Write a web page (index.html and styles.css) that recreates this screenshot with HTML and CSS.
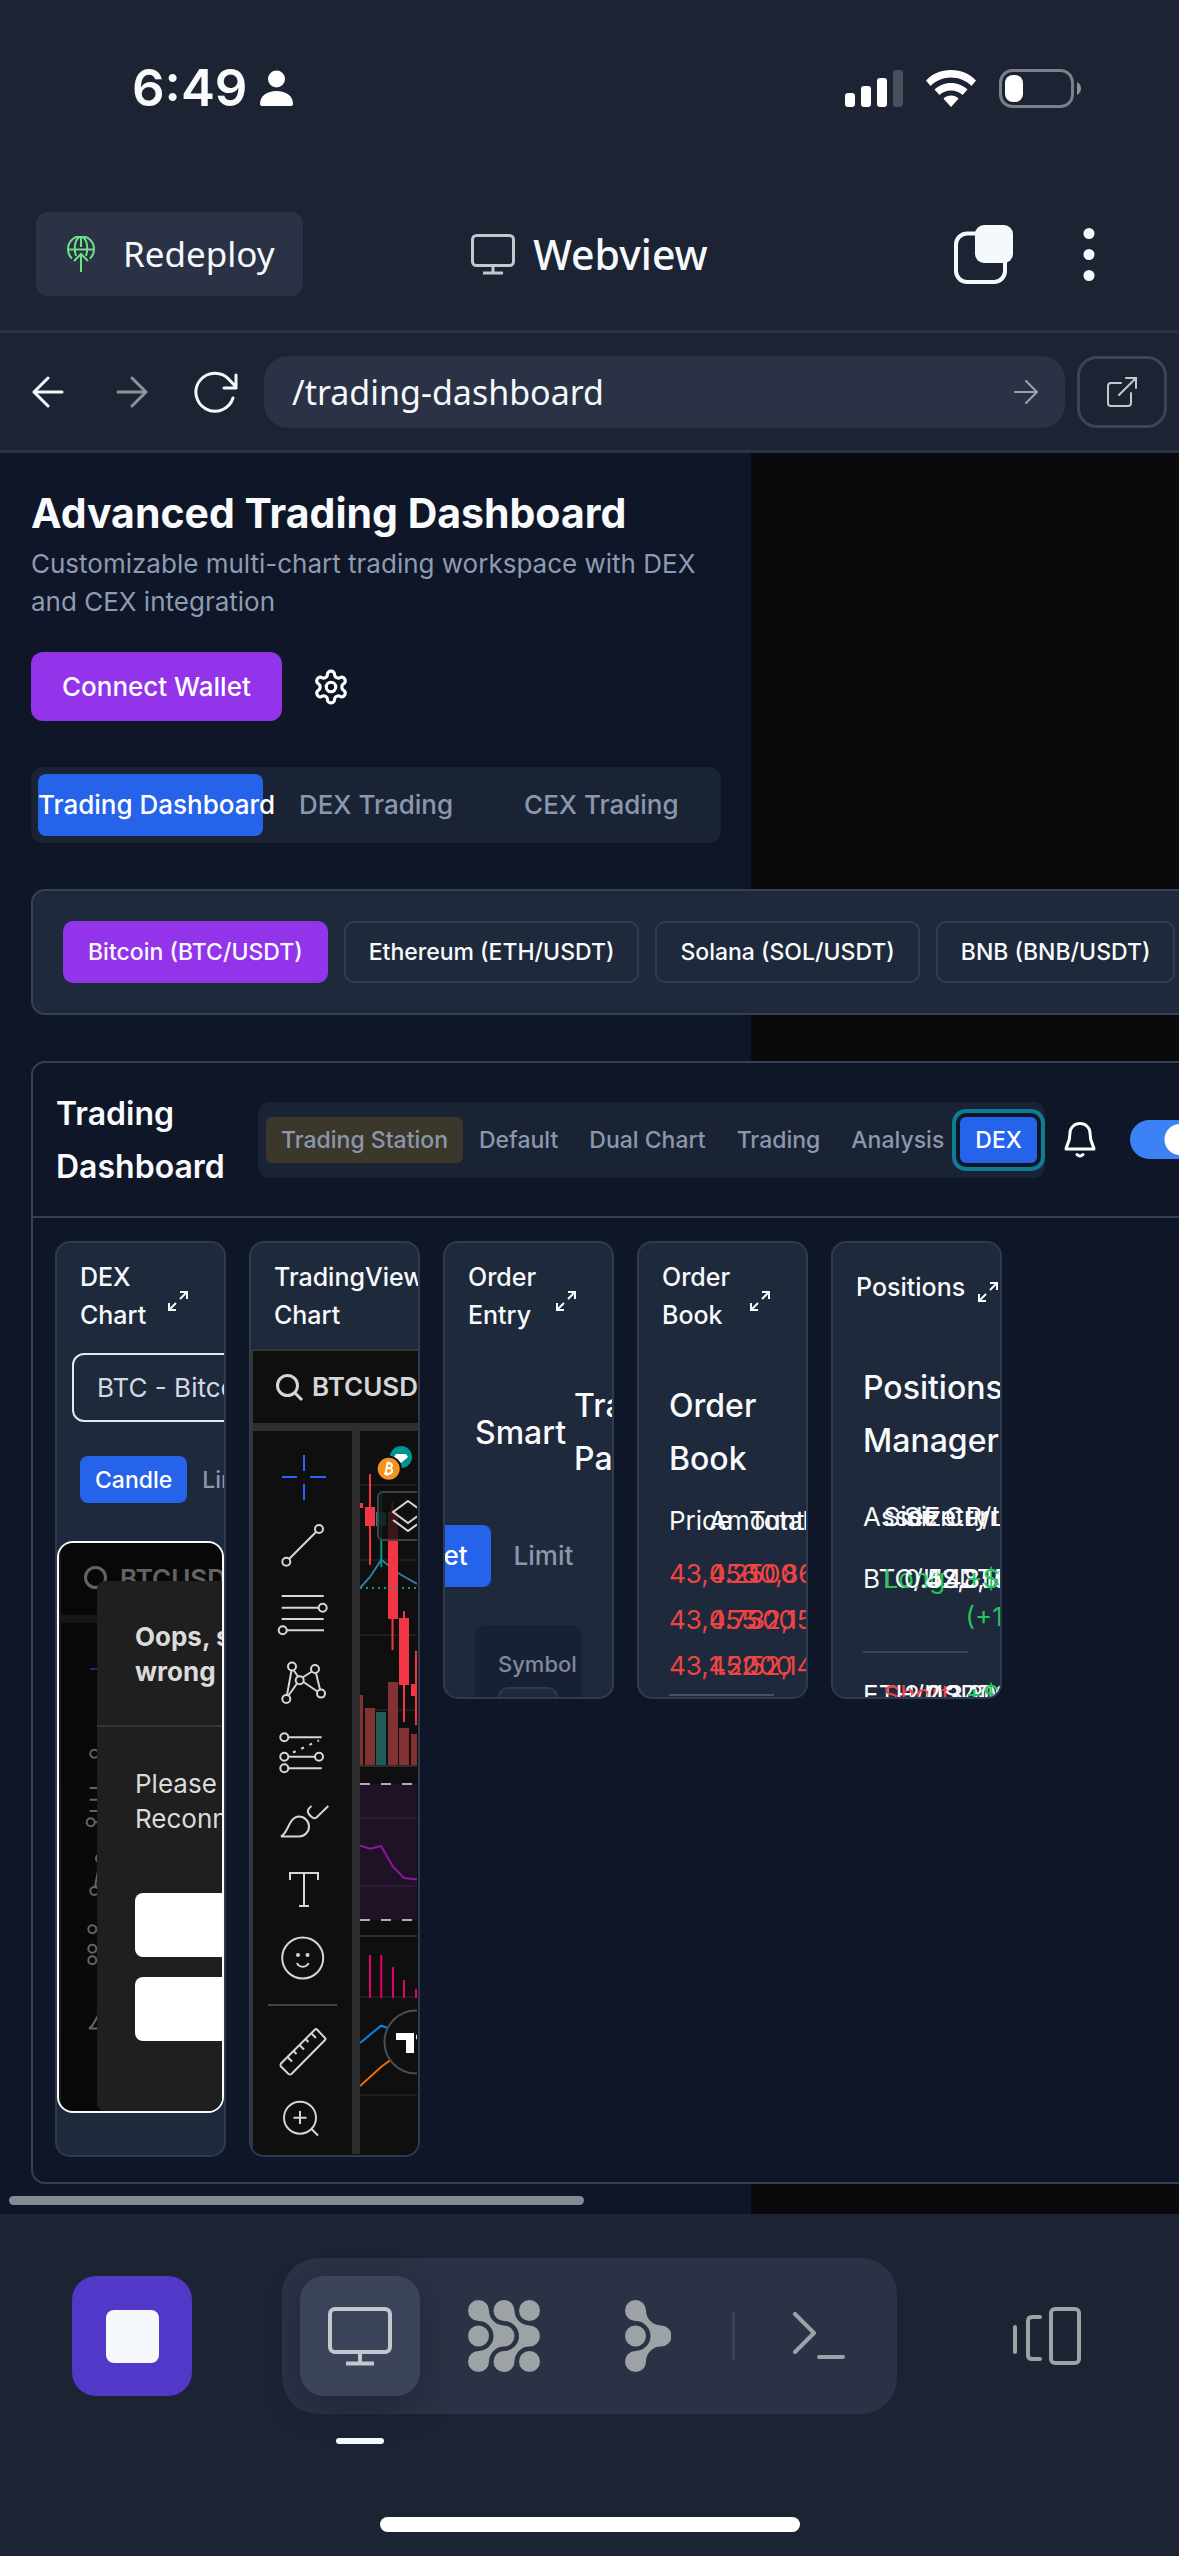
FILE: index.html
```html
<!DOCTYPE html>
<html lang="en">
<head>
<meta charset="utf-8">
<meta name="viewport" content="width=device-width, initial-scale=1">
<title>Webview – Trading Dashboard</title>
<link rel="stylesheet" href="styles.css">
</head>
<body>
<svg class="defs" aria-hidden="true">
  <symbol id="i-expand" viewBox="0 0 20 20"><path d="M12 1h7v7M19 1l-7 7M8 19H1v-7M1 19l7-7"/></symbol>
  <symbol id="i-search" viewBox="0 0 27 27"><circle cx="11.500" cy="11.500" r="10"/><path d="M19 19l7 7"/></symbol>
  <symbol id="i-tools" viewBox="0 0 99 723">
    <path class="cross" d="M51 24v16M51 53v16M29 46h15M57 46h16"/>
    <circle cx="33.300" cy="130.700" r="4"/><circle cx="66" cy="98" r="4"/><path d="M36.300 127.700L63 101"/>
    <path d="M28.700 165h42M28.700 176.700h37M28.700 188h42M34 199.300h37"/><circle cx="69.700" cy="176.700" r="4"/><circle cx="29.700" cy="199.300" r="4"/>
    <circle cx="39" cy="235.500" r="4"/><circle cx="62" cy="238" r="4"/><circle cx="46.700" cy="249.300" r="4"/><circle cx="33.300" cy="268" r="4"/><circle cx="68" cy="262.600" r="4"/>
    <path d="M38.500 239.500L34 264M40.500 239l4.500 6.500M44 252.500l-8.500 12M49.500 246.500l9.500-6M50.500 251l14 9.500M63 242l4 16.600"/>
    <circle cx="31.300" cy="306.300" r="4"/><circle cx="31.300" cy="325.700" r="4"/><circle cx="66" cy="325.700" r="4"/><circle cx="31.300" cy="337.300" r="4"/>
    <path d="M35.300 306.300h33.400M35.300 325.700H62M35.300 337.300h33.400"/><path class="dots" d="M40 321.500L66 309.500"/>
    <path d="M28 405.500c7-3 8-20 18-20a10 10 0 0 1 0 20zM58.500 375c-5 4-5 7 1 11.500q2 1.500 4 0L75.300 375"/>
    <path d="M37 449v-7h28v7M51 442v33M46 475h10"/>
    <circle cx="49.700" cy="527" r="20.500"/><path d="M44 532c2 5 9.500 5 11.500 0"/><circle class="fill" cx="45" cy="524" r="2"/><circle class="fill" cx="54.500" cy="524" r="2"/>
    <path class="rule" d="M15 574h69"/>
    <path d="M62 598.500q1-1 2 0l8 8.500q1 1 0 2L38.500 643q-1.500 1-3 0L28 635.500q-1-1.500 0-3zM34.500 626l4.500 4.500M40.500 620l3 3M46.500 614l4.500 4.500M52.500 608l3 3M58.500 602.500l4.500 4.500"/>
    <circle cx="47" cy="686.700" r="16"/><path d="M40.500 686.700h13M47 680v13M58.500 698l6.500 6.500"/>
  </symbol>
</svg>

<header class="shell-top">
  <div class="status">
    <div class="status-left">
      <span class="clock">6:49</span>
      <svg width="33" height="36" viewBox="0 0 33 36" fill="#fff"><circle cx="16.500" cy="9" r="8.500"/><path d="M0 34c0-8 7-13 16.500-13S33 26 33 34q0 2-2 2H2q-2 0-2-2z"/></svg>
    </div>
    <div class="status-right">
      <svg width="58" height="37" viewBox="0 0 58 37" fill="#fff"><rect y="23" width="10" height="14" rx="3"/><rect x="16" y="16" width="10" height="21" rx="3"/><rect x="32" y="8" width="10" height="29" rx="3"/><rect x="48" width="10" height="37" rx="3" fill="#4a4f5c"/></svg>
      <svg width="50" height="37" viewBox="0 0 50 37" fill="#fff"><path d="M25 0C15 0 6 4 0 10.500l4.500 5.500C10 10.500 17 7.500 25 7.500S40 10.500 45.500 16l4.500-5.500C44 4 35 0 25 0z"/><path d="M25 13c-6.500 0-12 2.500-16.500 6.500l5 5.500c3-3 7-4.500 11.500-4.500s8.500 1.500 11.500 4.500l5-5.500C37 15.500 31.500 13 25 13z"/><path d="M25 25.500c-3 0-5.500 1.200-7.500 3.200L25 37l7.500-8.300c-2-2-4.500-3.200-7.500-3.200z"/></svg>
      <svg width="82" height="39" viewBox="0 0 82 39"><rect x="1.500" y="1.500" width="72" height="36" rx="12" fill="none" stroke="#7b7f89" stroke-width="3"/><path d="M78 13q4 2.500 4 6.500t-4 6.500z" fill="#8e929b"/><rect x="6" y="6" width="18" height="27" rx="8" fill="#fff"/></svg>
    </div>
  </div>

  <div class="titlebar">
    <button class="redeploy" type="button">
      <svg width="28" height="36" viewBox="0 0 28 36" fill="none" stroke="#6fe088" stroke-width="2"><path d="M5 22.500A13 13 0 1 1 23 22.500M1 13.500h26M9 20C6 10 9 1 14 1s8 9 5 19M14 36V18M7 25l7-7 7 7M14 1v10"/></svg>
      Redeploy
    </button>
    <div class="view-name">
      <svg width="44" height="41" viewBox="0 0 44 41" fill="none" stroke="#c2c8cc" stroke-width="3"><rect x="1.500" y="1.500" width="41" height="30" rx="4"/><path d="M22 32v7M12 39h20"/></svg>
      <span>Webview</span>
    </div>
    <div class="title-actions">
      <button class="plain" type="button" aria-label="Tabs"><svg width="59" height="59" viewBox="0 0 59 59"><rect x="2" y="8.500" width="49" height="48.500" rx="11" fill="none" stroke="#f5f9fc" stroke-width="4"/><rect x="21" width="38" height="38" rx="9" fill="#f5f9fc"/></svg></button>
      <button class="plain" type="button" aria-label="More"><svg width="12" height="53" viewBox="0 0 12 53" fill="#f5f9fc"><circle cx="6" cy="5.500" r="5.500"/><circle cx="6" cy="26.500" r="5.500"/><circle cx="6" cy="47.500" r="5.500"/></svg></button>
    </div>
  </div>

  <form class="urlbar">
    <div class="nav-buttons">
      <button class="plain" type="button" aria-label="Back"><svg width="32" height="32" viewBox="0 0 32 32" fill="none" stroke="#f5f9fc" stroke-width="3" stroke-linecap="round" stroke-linejoin="round"><path d="M30 16H2M16 2L2 16l14 14"/></svg></button>
      <button class="plain" type="button" aria-label="Forward"><svg width="32" height="32" viewBox="0 0 32 32" fill="none" stroke="#8d9296" stroke-width="3" stroke-linecap="round" stroke-linejoin="round"><path d="M2 16h28M16 2l14 14-14 14"/></svg></button>
      <button class="plain" type="button" aria-label="Reload"><svg width="44" height="42" viewBox="0 0 44 42" fill="none" stroke="#f5f9fc" stroke-width="3" stroke-linecap="round" stroke-linejoin="round"><path d="M39 27A19 19 0 1 1 35.500 9L42 16M42 4v13H30"/></svg></button>
    </div>
    <div class="address">
      <input type="text" value="/trading-dashboard" aria-label="Address">
      <button class="plain" type="button" aria-label="Go"><svg width="24" height="24" viewBox="0 0 24 24" fill="none" stroke="#9da2a6" stroke-width="2" stroke-linecap="round" stroke-linejoin="round"><path d="M1 12h22M12 1l11 11-11 11"/></svg></button>
    </div>
    <button class="external" type="button" aria-label="Open in new tab"><svg width="30" height="30" viewBox="0 0 30 30" fill="none" stroke="#c2c8cc" stroke-width="2" stroke-linecap="round"><path d="M14 6H4Q1 6 1 9v17q0 3 3 3h17q3 0 3-3V16M19 1h10v10M29 1L12 18"/></svg></button>
  </form>
</header>

<main class="viewport">
  <div class="workspace">
    <h1>Advanced Trading Dashboard</h1>
    <p class="lead">Customizable multi-chart trading workspace with DEX and CEX integration</p>

    <div class="wallet-row">
      <button class="connect" type="button">Connect Wallet</button>
      <button class="plain" type="button" aria-label="Settings"><svg width="38" height="38" viewBox="0 0 24 24" fill="none" stroke="#fff" stroke-width="2" stroke-linecap="round" stroke-linejoin="round"><path d="M12.220 2h-.440a2 2 0 0 0-2 2v.180a2 2 0 0 1-1 1.730l-.430.250a2 2 0 0 1-2 0l-.150-.080a2 2 0 0 0-2.730.730l-.220.380a2 2 0 0 0 .730 2.730l.150.100a2 2 0 0 1 1 1.720v.510a2 2 0 0 1-1 1.740l-.150.090a2 2 0 0 0-.730 2.730l.220.380a2 2 0 0 0 2.730.730l.150-.080a2 2 0 0 1 2 0l.430.250a2 2 0 0 1 1 1.730V20a2 2 0 0 0 2 2h.440a2 2 0 0 0 2-2v-.180a2 2 0 0 1 1-1.730l.430-.250a2 2 0 0 1 2 0l.150.080a2 2 0 0 0 2.730-.730l.220-.390a2 2 0 0 0-.730-2.730l-.150-.080a2 2 0 0 1-1-1.740v-.500a2 2 0 0 1 1-1.740l.150-.090a2 2 0 0 0 .730-2.730l-.220-.380a2 2 0 0 0-2.730-.730l-.150.080a2 2 0 0 1-2 0l-.430-.250a2 2 0 0 1-1-1.730V4a2 2 0 0 0-2-2z"/><circle cx="12" cy="12" r="3"/></svg></button>
    </div>

    <nav class="tabs">
      <button class="tab active" type="button">Trading Dashboard</button>
      <button class="tab" type="button">DEX Trading</button>
      <button class="tab" type="button">CEX Trading</button>
    </nav>

    <section class="pairs">
      <button class="pair active" type="button">Bitcoin (BTC/USDT)</button>
      <button class="pair" type="button">Ethereum (ETH/USDT)</button>
      <button class="pair" type="button">Solana (SOL/USDT)</button>
      <button class="pair" type="button">BNB (BNB/USDT)</button>
    </section>

    <section class="board">
      <header class="board-head">
        <h2>Trading<br>Dashboard</h2>
        <div class="layouts">
          <button class="layout station" type="button">Trading Station</button>
          <button class="layout" type="button">Default</button>
          <button class="layout" type="button">Dual Chart</button>
          <button class="layout" type="button">Trading</button>
          <button class="layout" type="button">Analysis</button>
          <button class="layout dex" type="button">DEX</button>
        </div>
        <button class="plain" type="button" aria-label="Alerts"><svg width="32" height="36" viewBox="0 0 32 36" fill="none" stroke="#fff" stroke-width="3" stroke-linecap="round" stroke-linejoin="round"><path d="M6 11a10 9.500 0 0 1 20 0c0 10 4 13 4 16H2c0-3 4-6 4-16zM13 32.500q3 3 6 0"/></svg></button>
        <input class="toggle" type="checkbox" checked aria-label="Live alerts">
      </header>

      <div class="panels">
        <article class="panel tall">
          <header><h3>DEX Chart</h3><button class="plain" type="button" aria-label="Expand"><svg class="expand"><use href="#i-expand"/></svg></button></header>
          <div class="dex-controls">
            <select aria-label="Token"><option>BTC - Bitcoin</option></select>
            <div class="chart-kind"><button class="active" type="button">Candle</button><button type="button">Line</button></div>
          </div>
          <div class="frame">
            <div class="tv dimmed">
              <div class="tv-head"><svg width="27" height="27"><use href="#i-search"/></svg><span>BTCUSD</span></div>
              <div class="tv-body"><svg class="tools" width="99" height="723"><use href="#i-tools"/></svg></div>
            </div>
            <div class="dialog">
              <h4>Oops, something<br>wrong happened</h4>
              <p>Please try again<br>Reconnect now</p>
              <div class="dialog-actions"><button type="button" aria-label="Reconnect"></button><button type="button" aria-label="Dismiss"></button></div>
            </div>
          </div>
        </article>

        <article class="panel tall">
          <header><h3>TradingView Chart</h3></header>
          <div class="tv">
            <div class="tv-head"><svg width="27" height="27"><use href="#i-search"/></svg><span>BTCUSD</span></div>
            <div class="tv-body">
              <svg class="tools" width="99" height="723"><use href="#i-tools"/></svg>
              <svg class="candles" width="57" height="723" viewBox="0 0 57 723" fill="none">
                <path d="M0 54h57M0 129h57M0 204h57M0 279h57M0 566h57M0 664h57" stroke="#1e1e1e" stroke-width="2"/>
                <path d="M0 335h57M0 505h57" stroke="#2e2e2e" stroke-width="2"/>
                <g fill="#823232"><path d="M0 264h3v70H0zM5 277h10v57H5zM28 251h10v83H28zM39 297h10v37H39zM51 303h6v31h-6z"/></g>
                <path d="M16 281h10v53H16z" fill="#1e5c55"/>
                <path d="M0 157l10-11 11.300-17.300L38 142l19 11" stroke="#2f7d9f" stroke-width="2"/>
                <path d="M21.300 61v75" stroke="#089981" stroke-width="2"/><path d="M16 81h10v14H16z" fill="#089981"/>
                <path d="M10 43v91M32.500 71v148M44 180v111M56 220v74" stroke="#f23645" stroke-width="2"/>
                <path d="M0 72h3v5H0zM5 76h10v19H5zM28 81h10v107H28zM39 187h10v67H39zM51 253h6v12h-6z" fill="#f23645"/>
                <path d="M0 157h57" stroke="#089981" stroke-width="2" stroke-dasharray="2 4"/>
                <circle cx="41" cy="26" r="11" fill="#009393"/><path d="M36 23h10l2 3-7 6-7-6z" fill="#fff"/>
                <circle cx="28.700" cy="37.700" r="13" fill="#0f0f0f"/><circle cx="28.700" cy="37.700" r="11" fill="#f7931a"/>
                <path d="M26 32.500h4q2.500.5 2 2.500t-3 2.300q3.500.4 3 2.900t-4 2.600h-4M27.500 32.500l-2 10.300M26.500 37.300h3M28.500 30.500v2M27 42.800v2" stroke="#fff" stroke-width="2"/>
                <rect x="18" y="61" width="60" height="48" rx="5" fill="#0f0f0f" fill-opacity=".8" stroke="#434343" stroke-width="2"/>
                <path d="M48 70l15 11-15 11-15-11zM33 89l15 11 15-11" stroke="#d6d6d6" stroke-width="2"/>
                <path d="M0 353h57v136H0z" fill="#1f1126"/><path d="M0 387h57M0 455h57" stroke="#2a1d31" stroke-width="2"/>
                <path d="M0 353h10M21 353h10M42 353h10M0 489h10M21 489h10M42 489h10" stroke="#b8a8bc" stroke-width="2"/>
                <path d="M0 414.700l10 3 11-2.700 12 20.700L44 447l13 1.500" stroke="#8a189e" stroke-width="2"/>
                <path d="M10 524v43M21.300 524v43M33 536v31M44 549v18M56 558v9" stroke="#e5006d" stroke-width="2"/>
                <path d="M0 612l21-17.300 9 3" stroke="#0a84e8" stroke-width="2"/><path d="M0 655l21.300-19.300L32 628" stroke="#ef6c00" stroke-width="2"/>
                <circle cx="56" cy="611" r="31.500" fill="#0f0f0f" stroke="#4d4d4d" stroke-width="2"/>
                <path d="M36 602h18v20h-8v-13H36z" fill="#fff"/><circle cx="60" cy="606" r="4" fill="#fff"/>
              </svg>
            </div>
          </div>
        </article>

        <article class="panel">
          <header><h3>Order Entry</h3><button class="plain" type="button" aria-label="Expand"><svg class="expand"><use href="#i-expand"/></svg></button></header>
          <div class="panel-body entry">
            <div class="big smart"><span>Smart</span><span>Trading<br>Panel</span></div>
            <div class="order-kind"><button class="active" type="button">Market</button><button type="button">Limit</button><button type="button">Stop</button></div>
            <div class="order-form"><label for="symbol">Symbol</label><input id="symbol" type="text"></div>
          </div>
        </article>

        <article class="panel">
          <header><h3>Order Book</h3><button class="plain" type="button" aria-label="Expand"><svg class="expand"><use href="#i-expand"/></svg></button></header>
          <div class="panel-body">
            <div class="big">Order Book</div>
            <div class="book">
              <table>
                <thead><tr><th>Price</th><th>Amount</th><th>Total</th></tr></thead>
                <tbody>
                  <tr><td>43,456</td><td>0.2500</td><td>10,864</td></tr>
                  <tr><td>43,455</td><td>0.7500</td><td>32,150</td></tr>
                  <tr><td>43,452</td><td>1.2000</td><td>52,142</td></tr>
                </tbody>
              </table>
            </div>
          </div>
        </article>

        <article class="panel">
          <header><h3>Positions</h3><button class="plain" type="button" aria-label="Expand"><svg class="expand"><use href="#i-expand"/></svg></button></header>
          <div class="panel-body">
            <div class="big">Positions Manager</div>
            <table class="positions">
              <thead><tr><th>Asset</th><th>Side</th><th>Size</th><th>Entry</th><th>Current</th><th>P/L</th></tr></thead>
              <tbody>
                <tr><td>BTC/USDT</td><td class="up">Long</td><td>0.5</td><td>42,850</td><td>43,150</td><td class="up">+$510<br>(+1.2%)</td></tr>
                <tr><td>ETH/USDT</td><td class="down">Short</td><td>2.0</td><td>2,340</td><td>2,310</td><td class="up">+$60<br>(+1.3%)</td></tr>
              </tbody>
            </table>
          </div>
        </article>
      </div>
    </section>
  </div>
  <div class="scrollbar"></div>
</main>

<footer class="dock">
  <div class="dock-row">
    <button class="stop" type="button" aria-label="Stop"><span></span></button>
    <nav class="tools-pill">
      <button class="dock-btn active" type="button" aria-label="Webview"><svg width="64" height="59" viewBox="0 0 64 59" fill="none" stroke="#c2c8cc" stroke-width="4"><rect x="2" y="2" width="60" height="43" rx="5"/><path d="M32 45v11M18 56.500h28"/></svg></button>
      <button class="dock-btn" type="button" aria-label="Agent"><svg width="72" height="72" viewBox="0 0 72 72" fill="#9da2a6"><path id="chev" d="M21 10.500A15 15 0 0 0 36 25.500A10.500 10.500 0 0 1 36 46.500A15 15 0 0 0 21 61.500A10.500 10.500 0 1 1 10.500 51A15 15 0 0 0 10.500 21A10.500 10.500 0 1 1 21 10.500Z"/><use href="#chev" x="25.500"/><circle cx="10.500" cy="36" r="10.500"/><circle cx="61.500" cy="10.500" r="10.500"/><circle cx="61.500" cy="61.500" r="10.500"/></svg></button>
      <button class="dock-btn" type="button" aria-label="Assistant"><svg width="46" height="72" viewBox="0 0 46 72" fill="#9da2a6"><use href="#chev"/><circle cx="10.500" cy="36" r="10.500"/></svg></button>
      <span class="divider"></span>
      <button class="dock-btn" type="button" aria-label="Shell"><svg width="54" height="48" viewBox="0 0 54 48" fill="none" stroke="#9da2a6" stroke-width="4" stroke-linecap="round" stroke-linejoin="round"><path d="M3 2l19 19L3 40M27 45h24"/></svg></button>
    </nav>
    <button class="dock-btn" type="button" aria-label="Switch view"><svg width="68" height="59" viewBox="0 0 68 59" fill="none" stroke="#9da2a6" stroke-width="4" stroke-linecap="round"><path d="M2 20v25M27 10H19q-4 0-4 4v34q0 4 4 4h8"/><rect x="38" y="2" width="28" height="54" rx="4"/></svg></button>
  </div>
  <div class="home-bar"></div>
</footer>
</body>
</html>
```

FILE: styles.css
```css
* { box-sizing: border-box; }

body {
  margin: 0;
  min-height: 100vh;
  display: flex;
  flex-direction: column;
  background: #1c2333;
  color: #f8fafc;
  font-family: Inter, "Liberation Sans", sans-serif;
  font-size: 26px;
  line-height: 38px;
}

h1, h2, h3, h4, p { margin: 0; }
svg { display: block; flex: none; }
button, input, select { font: inherit; color: inherit; }
button { margin: 0; padding: 0; border: 0; background: none; white-space: nowrap; }
.defs { position: absolute; width: 0; height: 0; }
.plain { display: flex; align-items: center; justify-content: center; }

/* Phone status bar and app chrome */
.shell-top { font-family: "Noto Sans", "Open Sans", sans-serif; }

.status {
  height: 176px;
  padding: 0 98px 0 132px;
  display: flex;
  align-items: center;
  justify-content: space-between;
}
.status-left { display: flex; align-items: center; gap: 13px; }
.status-right { display: flex; align-items: center; gap: 23px; }
.clock { font-family: Inter, sans-serif; font-size: 51px; font-weight: 600; }

.titlebar {
  display: grid;
  grid-template-columns: 1fr auto 1fr;
  align-items: center;
  padding: 36px 36px 34px;
  border-bottom: 3px solid #2b3245;
}
.redeploy {
  justify-self: start;
  height: 84px;
  padding: 0 28px 0 31px;
  display: flex;
  align-items: center;
  gap: 28px;
  border-radius: 12px;
  background: #2b3245;
  color: #f5f9fc;
  font-size: 35px;
}
.view-name { display: flex; align-items: center; gap: 18px; color: #f5f9fc; font-size: 41px; font-weight: 500; }
.title-actions { display: flex; justify-content: flex-end; align-items: center; gap: 70px; padding-right: 48px; }

.urlbar {
  display: flex;
  align-items: center;
  padding: 23px 12px 22px 6px;
  border-bottom: 3px solid #2b3245;
}
.nav-buttons { display: flex; margin-right: 6px; }
.nav-buttons button { width: 84px; height: 72px; }
.address {
  flex: 1;
  min-width: 0;
  height: 72px;
  margin-right: 12px;
  padding: 0 27px 0 28px;
  display: flex;
  align-items: center;
  border-radius: 24px;
  background: #2b3245;
}
.address input {
  flex: 1;
  min-width: 0;
  height: 60px;
  padding: 0;
  border: 0;
  outline: 0;
  background: none;
  color: #f5f9fc;
  font-size: 34px;
  line-height: 60px;
}
.external {
  width: 90px;
  height: 72px;
  display: flex;
  align-items: center;
  justify-content: center;
  border: 3px solid #3c445c;
  border-radius: 20px;
}

/* Embedded page: the workspace is narrower than the cards inside it */
.viewport { overflow: hidden; background: linear-gradient(90deg, #0e1628 63.7%, #0a0a0d 63.7%); }
.workspace { width: 63.7%; padding: 34px 30px 0 31px; }
h1 { font-size: 41px; line-height: 53px; font-weight: 700; white-space: nowrap; }
.lead { margin-top: 5px; color: #8f9bb0; }

.wallet-row { display: flex; align-items: center; gap: 30px; margin-top: 31px; }
.connect {
  height: 69px;
  padding: 0 31px;
  border-radius: 12px;
  background: #9333ea;
  color: #fff;
  font-weight: 500;
}

.tabs {
  display: grid;
  grid-template-columns: repeat(3, minmax(0, 1fr));
  margin-top: 46px;
  padding: 7px;
  border-radius: 12px;
  background: #1a2334;
}
.tab {
  height: 62px;
  display: flex;
  align-items: center;
  justify-content: safe center;
  border-radius: 8px;
  color: #8b97ad;
  font-weight: 500;
}
.tab.active { background: #2563eb; color: #fff; }

.pairs {
  width: 1400px;
  margin-top: 46px;
  padding: 30px;
  display: flex;
  gap: 16px;
  border: 2px solid #334155;
  border-radius: 14px;
  background: #1e293b;
}
.pair {
  height: 62px;
  padding: 0 23px;
  border: 2px solid #2f3d50;
  border-radius: 10px;
  font-size: 23px;
  font-weight: 500;
}
.pair.active { border-color: #9333ea; background: #9333ea; }

.board {
  width: 1400px;
  margin-top: 46px;
  border: 2px solid #334155;
  border-radius: 14px;
  background: #0e1628;
}
.board-head {
  height: 155px;
  padding: 0 23px;
  display: flex;
  align-items: center;
  border-bottom: 2px solid #334155;
}
h2 { width: 171px; margin-right: 31px; font-size: 32px; line-height: 53px; font-weight: 600; }
.layouts {
  display: flex;
  gap: 1px;
  margin-right: 19px;
  padding: 15px 8px;
  border-radius: 12px;
  background: #1a2334;
}
.layout {
  height: 46px;
  padding: 0 15px;
  border-radius: 6px;
  color: #8b97ad;
  font-size: 23px;
  font-weight: 500;
}
.layout.station { background: #3c372b; }
.layout.dex {
  background: #2563eb;
  color: #fff;
  box-shadow: 0 0 0 4px #0e1628, 0 0 0 8px #0e7c93;
}
.toggle {
  appearance: none;
  width: 70px;
  height: 39px;
  margin: 0 0 0 34px;
  border-radius: 20px;
  background: radial-gradient(circle at 50px 50%, #fff 15px, #3b82f6 16px);
}

/* Dashboard panels */
.panels { display: grid; grid-template-columns: repeat(5, 171px); gap: 23px; align-items: start; padding: 23px 22px 25px; }
.panel {
  height: 458px;
  overflow: hidden;
  border: 2px solid #2d3b4e;
  border-radius: 15px;
  background: #1e293b;
}
.panel.tall { height: 916px; display: flex; flex-direction: column; }
.panel > header {
  min-height: 88px;
  padding: 15px 23px;
  display: flex;
  align-items: center;
  gap: 13px;
  justify-content: space-between;
}
h3 { font-size: 25px; line-height: 38px; font-weight: 500; }
.expand { width: 20px; height: 20px; margin: 10px 13px 0 0; fill: none; stroke: #f8fafc; stroke-width: 2; }

.dex-controls { padding: 4px 0 38px 15px; }
.dex-controls select {
  appearance: none;
  width: 300px;
  height: 69px;
  padding: 0 23px;
  border: 2px solid #e5e9ee;
  border-radius: 12px;
  background: #1e293b;
  color: #d3d9e2;
}
.chart-kind { display: flex; margin: 34px 0 0 8px; }
.chart-kind button { height: 47px; padding: 0 15px; border-radius: 8px; color: #8b97ad; font-size: 23px; font-weight: 500; }
.chart-kind .active { background: #2563eb; color: #fff; }

.frame {
  position: relative;
  height: 572px;
  overflow: hidden;
  border: 2px solid #f8fafc;
  border-radius: 16px;
  background: #060606;
}
.tv { flex: 1; min-height: 0; overflow: hidden; border-top: 2px solid #363636; border-left: 2px solid #363636; background: #0f0f0f; color: #d6d6d6; }
.tv.dimmed { opacity: .45; border-top: 0; background: #0d0d0d; }
.tv-head {
  height: 80px;
  padding-left: 23px;
  display: flex;
  align-items: center;
  gap: 9px;
  border-bottom: 8px solid #2e2e2e;
  font-weight: 600;
}
.tv-head svg { fill: none; stroke: #d6d6d6; stroke-width: 3; }
.tv-body { display: flex; }
.tools { fill: none; stroke: #d6d6d6; stroke-width: 2; box-sizing: content-box; border-right: 8px solid #2e2e2e; }
.cross { stroke: #2962ff; }
.rule { stroke: #434343; }
.fill { fill: #d6d6d6; stroke: none; }
.dots { stroke-dasharray: 3 6; }
.dialog {
  position: absolute;
  inset: 38px -200px 0 38px;
  border-radius: 8px;
  background: #1f1f1f;
  color: #dbdbdb;
  line-height: 35px;
}
.dialog h4 { padding: 38px 38px 36px; border-bottom: 2px solid #363636; font-weight: 700; white-space: nowrap; }
.dialog p { padding: 39px 38px; white-space: nowrap; }
.dialog-actions { display: grid; gap: 20px; padding: 18px 38px; }
.dialog-actions button { height: 64px; border-radius: 8px; background: #fff; }

.panel-body { padding: 30px; }
.big { font-size: 32px; line-height: 53px; font-weight: 500; }
.smart { display: flex; align-items: center; gap: 8px; }
.order-kind { display: flex; justify-content: center; margin-top: 40px; }
.order-kind button { height: 62px; padding: 0 23px; border-radius: 8px; color: #8b97ad; font-weight: 500; }
.order-kind .active { background: #2563eb; color: #fff; }
.order-form { height: 120px; margin-top: 38px; padding: 20px 23px; border-radius: 12px; background: #182033; }
.order-form label { display: block; color: #7d899e; font-size: 22px; font-weight: 500; }
.order-form input { width: 60px; height: 60px; margin-top: 4px; border: 2px solid #2d3b4e; border-radius: 10px; background: #1e293b; }

table { border-collapse: collapse; table-layout: fixed; }
th, td { padding: 0; text-align: left; vertical-align: top; font-weight: 400; white-space: nowrap; }
.book { width: 105px; margin-top: 17px; padding-bottom: 9px; border-bottom: 2px solid #475161; }
.book table { width: 120px; }
.book thead th { padding-bottom: 15px; }
.book td { padding-bottom: 8px; color: #ef4444; }
.book tbody tr:last-child td { padding-bottom: 0; }
.positions { width: 123px; margin-top: 31px; }
.positions th { padding-bottom: 24px; }
.positions td { padding-bottom: 17px; }
.positions tbody tr + tr td { padding-top: 23px; }
.positions tbody tr:first-child { background: linear-gradient(#384456, #384456) left bottom / 105px 2px no-repeat; }
.up { color: #22c55e; }
.down { color: #ef4444; }

.scrollbar { width: 48.8%; height: 9px; margin: 12px 9px 9px; border-radius: 5px; background: #868a93; }

/* Bottom dock */
.dock { padding: 44px 72px 24px; }
.dock-row { display: flex; align-items: center; justify-content: space-between; }
.stop {
  width: 120px;
  height: 120px;
  display: grid;
  place-items: center;
  border-radius: 24px;
  background: #5238c8;
}
.stop span { width: 53px; height: 53px; border-radius: 8px; background: #f5f9fc; }
.tools-pill {
  display: flex;
  align-items: center;
  gap: 24px;
  padding: 18px;
  border-radius: 36px;
  background: #2b3245;
}
.dock-btn { position: relative; width: 120px; height: 120px; display: grid; place-items: center; border-radius: 24px; }
.dock-btn.active { background: #3c445c; box-shadow: 0 12px 32px rgba(14, 20, 36, .35); }
.dock-btn.active::after {
  content: "";
  position: absolute;
  left: 36px;
  right: 36px;
  bottom: -48px;
  height: 6px;
  border-radius: 3px;
  background: #f5f9fc;
}
.divider { width: 3px; height: 48px; background: #3c445c; }
.home-bar { width: 420px; height: 15px; margin: 103px auto 0; border-radius: 8px; background: #fff; }
```
